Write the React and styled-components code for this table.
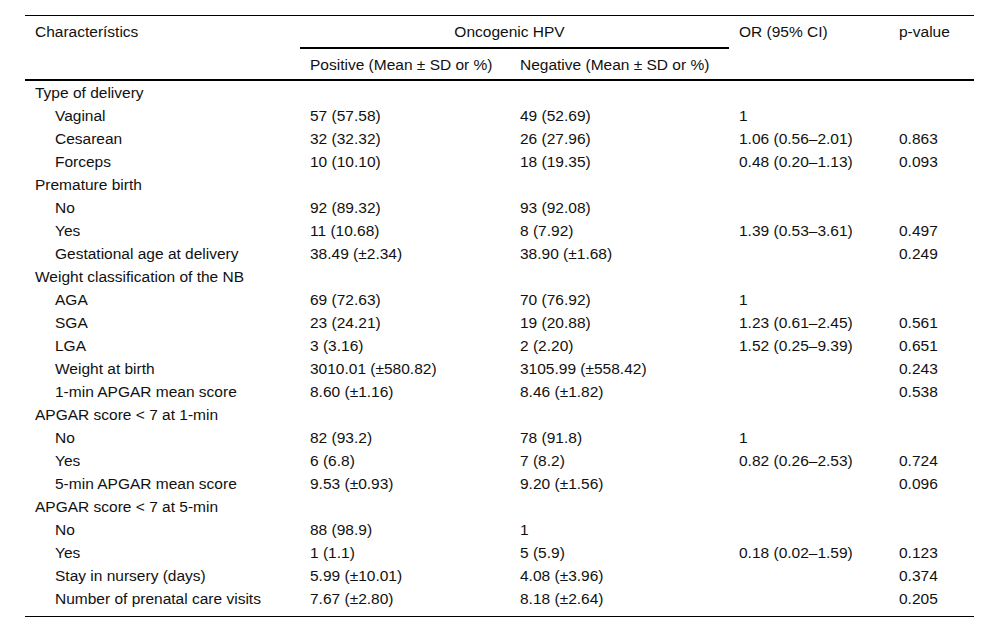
import React from 'react';
import styled, { createGlobalStyle } from 'styled-components';

const GlobalStyle = createGlobalStyle`
  body {
    margin: 0;
    background: #fff;
    font-family: "Liberation Sans", Arial, sans-serif;
    color: #111;
  }
`;

const Page = styled.div`
  padding: 15px 26px 0 25px;
`;

const Table = styled.table`
  width: 949px;
  border-collapse: separate;
  border-spacing: 0;
  table-layout: fixed;
  font-size: 15.5px;
`;

const HeadRow = styled.tr`
  height: ${(p) => p.h}px;
`;

const HeadCell = styled.th`
  font-weight: normal;
  text-align: left;
  vertical-align: top;
  padding: 7px 10px 0 ${(p) => (p.center ? 0 : 10)}px;
  line-height: 17px;
  white-space: nowrap;
  ${(p) => p.center && 'text-align: center;'}
  border-top: ${(p) => (p.top ? '1px solid #000' : 'none')};
  border-bottom: ${(p) => (p.bottom ? '2px solid #000' : 'none')};
`;

const Body = styled.tbody`
  tr:last-child td {
    padding-bottom: 6px;
    border-bottom: 1px solid #000;
  }
`;

const Cell = styled.td`
  padding: 0 10px 0 ${(p) => (p.indent ? 30 : 10)}px;
  line-height: 23px;
  white-space: nowrap;
  vertical-align: top;
`;

const rows = [
  ['Type of delivery'],
  ['Vaginal', '57 (57.58)', '49 (52.69)', '1', ''],
  ['Cesarean', '32 (32.32)', '26 (27.96)', '1.06 (0.56–2.01)', '0.863'],
  ['Forceps', '10 (10.10)', '18 (19.35)', '0.48 (0.20–1.13)', '0.093'],
  ['Premature birth'],
  ['No', '92 (89.32)', '93 (92.08)', '', ''],
  ['Yes', '11 (10.68)', '8 (7.92)', '1.39 (0.53–3.61)', '0.497'],
  ['Gestational age at delivery', '38.49 (±2.34)', '38.90 (±1.68)', '', '0.249'],
  ['Weight classification of the NB'],
  ['AGA', '69 (72.63)', '70 (76.92)', '1', ''],
  ['SGA', '23 (24.21)', '19 (20.88)', '1.23 (0.61–2.45)', '0.561'],
  ['LGA', '3 (3.16)', '2 (2.20)', '1.52 (0.25–9.39)', '0.651'],
  ['Weight at birth', '3010.01 (±580.82)', '3105.99 (±558.42)', '', '0.243'],
  ['1-min APGAR mean score', '8.60 (±1.16)', '8.46 (±1.82)', '', '0.538'],
  ['APGAR score < 7 at 1-min'],
  ['No', '82 (93.2)', '78 (91.8)', '1', ''],
  ['Yes', '6 (6.8)', '7 (8.2)', '0.82 (0.26–2.53)', '0.724'],
  ['5-min APGAR mean score', '9.53 (±0.93)', '9.20 (±1.56)', '', '0.096'],
  ['APGAR score < 7 at 5-min'],
  ['No', '88 (98.9)', '1', '', ''],
  ['Yes', '1 (1.1)', '5 (5.9)', '0.18 (0.02–1.59)', '0.123'],
  ['Stay in nursery (days)', '5.99 (±10.01)', '4.08 (±3.96)', '', '0.374'],
  ['Number of prenatal care visits', '7.67 (±2.80)', '8.18 (±2.64)', '', '0.205'],
];

const App = () => {
  return (
    <Page>
      <GlobalStyle />
      <Table>
        <colgroup>
          <col style={{ width: 275 }} />
          <col style={{ width: 210 }} />
          <col style={{ width: 219 }} />
          <col style={{ width: 160 }} />
          <col style={{ width: 85 }} />
        </colgroup>
        <thead>
          <HeadRow h={34}>
            <HeadCell rowSpan={2} top bottom>
              Characterístics
            </HeadCell>
            <HeadCell colSpan={2} top bottom center>
              Oncogenic HPV
            </HeadCell>
            <HeadCell rowSpan={2} top bottom>
              OR (95% CI)
            </HeadCell>
            <HeadCell rowSpan={2} top bottom>
              p-value
            </HeadCell>
          </HeadRow>
          <HeadRow h={32}>
            <HeadCell bottom>Positive (Mean ± SD or %)</HeadCell>
            <HeadCell bottom>Negative (Mean ± SD or %)</HeadCell>
          </HeadRow>
        </thead>
        <Body>
          {rows.map((r, i) =>
            r.length === 1 ? (
              <tr key={i}>
                <Cell>{r[0]}</Cell>
                <Cell />
                <Cell />
                <Cell />
                <Cell />
              </tr>
            ) : (
              <tr key={i}>
                <Cell indent>{r[0]}</Cell>
                <Cell>{r[1]}</Cell>
                <Cell>{r[2]}</Cell>
                <Cell>{r[3]}</Cell>
                <Cell>{r[4]}</Cell>
              </tr>
            )
          )}
        </Body>
      </Table>
    </Page>
  );
};

export default App;
